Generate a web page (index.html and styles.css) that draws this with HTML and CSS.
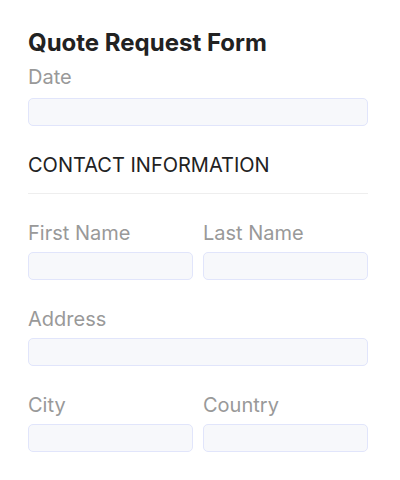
FILE: index.html
```html
<!DOCTYPE html>
<html>
<head>
<meta charset="utf-8">
<link rel="stylesheet" href="styles.css">
</head>
<body>
<form class="form">
  <h1 class="title">Quote Request Form</h1>
  <div class="field field-date">
    <label class="label">Date</label>
    <div class="input"></div>
  </div>
  <h2 class="section">CONTACT INFORMATION</h2>
  <div class="divider"></div>
  <div class="row">
    <div class="field">
      <label class="label">First Name</label>
      <div class="input"></div>
    </div>
    <div class="field">
      <label class="label">Last Name</label>
      <div class="input"></div>
    </div>
  </div>
  <div class="field">
    <label class="label">Address</label>
    <div class="input"></div>
  </div>
  <div class="row">
    <div class="field">
      <label class="label">City</label>
      <div class="input"></div>
    </div>
    <div class="field">
      <label class="label">Country</label>
      <div class="input"></div>
    </div>
  </div>
</form>
</body>
</html>
```

FILE: styles.css
```css
html, body {
  margin: 0;
  padding: 0;
  background: #fff;
}
body {
  font-family: Inter, "Noto Sans", sans-serif;
}
.form {
  padding: 29px 32px 0 28px;
  display: flex;
  flex-direction: column;
}
.title {
  margin: 0;
  font-size: 24px;
  line-height: 28px;
  font-weight: 700;
  color: #222;
}
.field {
  display: flex;
  flex-direction: column;
  margin-top: 27px;
}
.field-date {
  margin-top: 8px;
}
.label {
  font-size: 20px;
  line-height: 24px;
  color: #999;
  margin-bottom: 7px;
}
.field-date .label {
  margin-bottom: 9px;
}
.input {
  height: 26px;
  background: #f7f8fb;
  border: 1px solid #e1e5fb;
  border-radius: 5px;
}
.section {
  margin: 27px 0 0;
  font-size: 20px;
  line-height: 24px;
  font-weight: 400;
  color: #222;
}
.divider {
  height: 1px;
  background: #eee;
  margin-top: 16px;
}
.row {
  display: grid;
  grid-template-columns: 1fr 1fr;
  column-gap: 10px;
}
```
